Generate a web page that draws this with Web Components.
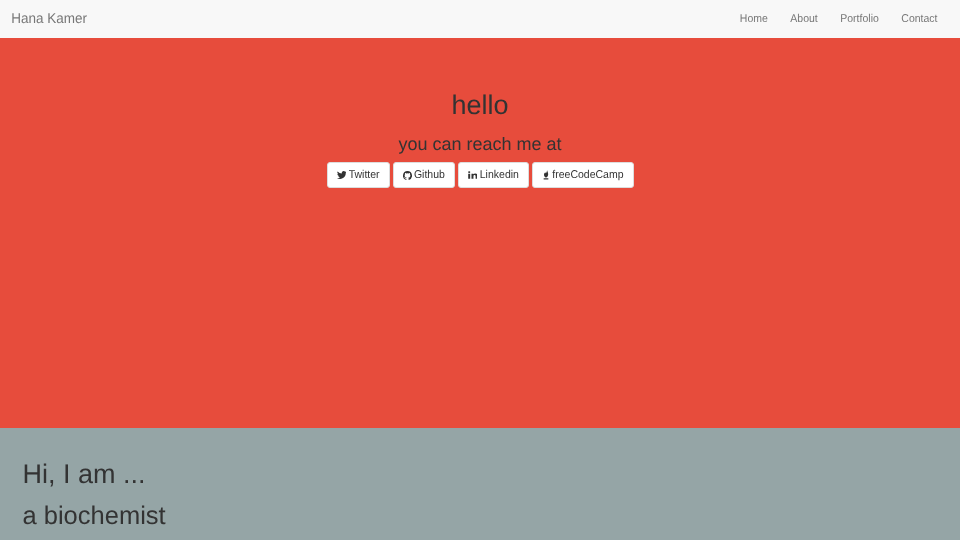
<!DOCTYPE html>
<html>
<head>
<meta charset="utf-8">
<style>
html, body { margin: 0; padding: 0; height: 100%; overflow: hidden; }
body {
	display: flex;
	flex-direction: column;
	font-family: "Liberation Sans", Arial, sans-serif;
	font-size: 10.5px;
	line-height: 15px;
	color: #333;
	text-rendering: geometricPrecision;
}
</style>
</head>
<body>
<site-nav brand="Hana Kamer">
	<nav-link>Home</nav-link>
	<nav-link>About</nav-link>
	<nav-link>Portfolio</nav-link>
	<nav-link>Contact</nav-link>
</site-nav>
<hero-panel>
	<span slot="title">hello</span>
	<span slot="sub">you can reach me at</span>
	<social-btn icon="twitter">Twitter</social-btn>
	<social-btn icon="github">Github</social-btn>
	<social-btn icon="linkedin">Linkedin</social-btn>
	<social-btn icon="fire">freeCodeCamp</social-btn>
</hero-panel>
<about-panel>
	<span slot="title">Hi, I am ...</span>
	<span slot="sub">a biochemist</span>
</about-panel>

<script>
class SiteNav extends HTMLElement
{
	constructor() {
		super();
		this.attachShadow({mode: 'open'});
		this.shadowRoot.innerHTML = `
			<style>
				:host {
					display: flex;
					flex: none;
					justify-content: space-between;
					height: 38px;
					box-sizing: border-box;
					padding: 0 11.25px;
					background: #f8f8f8;
				}
				#brand {
					padding: 11px 0;
					font-size: 13.5px;
					line-height: 15px;
					color: #777;
					filter: blur(.3px);
					transform: scaleY(1.06);
				}
				#links { display: flex; }
			</style>
			<div id="brand"></div>
			<div id="links"><slot></slot></div>
		`;
		this.shadowRoot.getElementById('brand').textContent = this.getAttribute('brand');
	}
}

class NavLink extends HTMLElement
{
	constructor() {
		super();
		this.attachShadow({mode: 'open'});
		this.shadowRoot.innerHTML = `
			<style>
				:host {
					display: block;
					padding: 12px 11.25px 10px;
					font-size: 10.5px;
					line-height: 15px;
					color: #777;
					filter: blur(.3px);
					transform: scaleY(1.08);
				}
			</style>
			<slot></slot>
		`;
	}
}

class HeroPanel extends HTMLElement
{
	constructor() {
		super();
		this.attachShadow({mode: 'open'});
		this.shadowRoot.innerHTML = `
			<style>
				:host {
					display: flex;
					flex: none;
					flex-direction: column;
					align-items: center;
					height: 390px;
					box-sizing: border-box;
					padding-top: 52px;
					background: #e74c3c;
				}
				#title { font-size: 27px; line-height: 30px; filter: blur(.3px); }
				#sub { font-size: 18px; line-height: 20px; margin-top: 14px; filter: blur(.3px); }
				#buttons { display: flex; gap: 3px; margin-top: 8px; }
			</style>
			<div id="title"><slot name="title"></slot></div>
			<div id="sub"><slot name="sub"></slot></div>
			<div id="buttons"><slot></slot></div>
		`;
	}
}

// width, height, viewBox, path
const ICONS = {
	twitter: [9.75, 8, '0 2 24 20', '<path d="M23.95 4.57a10 10 0 0 1-2.82.77 4.96 4.96 0 0 0 2.16-2.72 9.9 9.9 0 0 1-3.12 1.18 4.92 4.92 0 0 0-8.38 4.48A13.98 13.98 0 0 1 1.64 3.16a4.92 4.92 0 0 0 1.52 6.57 4.9 4.9 0 0 1-2.23-.61v.06a4.92 4.92 0 0 0 3.95 4.83 5 5 0 0 1-2.21.08 4.94 4.94 0 0 0 4.6 3.42A9.87 9.87 0 0 1 0 19.54a13.94 13.94 0 0 0 7.55 2.21c9.05 0 14-7.5 14-13.98 0-.21 0-.42-.02-.63a10 10 0 0 0 2.46-2.55z"/>'],
	github: [9, 9, '0 0 24 24', '<path d="M12 .3a12 12 0 0 0-3.8 23.4c.6.1.8-.26.8-.58v-2.03c-3.34.73-4.04-1.6-4.04-1.6-.55-1.4-1.34-1.77-1.34-1.77-1.08-.74.09-.73.09-.73 1.2.09 1.84 1.24 1.84 1.24 1.07 1.83 2.8 1.3 3.49 1 .1-.78.42-1.3.76-1.6-2.67-.3-5.47-1.33-5.47-5.93 0-1.31.47-2.38 1.24-3.22-.13-.3-.54-1.52.1-3.18 0 0 1-.32 3.3 1.23a11.5 11.5 0 0 1 6 0c2.28-1.55 3.29-1.23 3.29-1.23.64 1.66.24 2.88.12 3.18a4.65 4.65 0 0 1 1.23 3.22c0 4.61-2.8 5.63-5.48 5.92.42.36.81 1.1.81 2.22v3.29c0 .32.2.7.82.58A12 12 0 0 0 12 .3z"/>'],
	linkedin: [9.5, 8, '0 0 24 24', '<path d="M.5 8h5v15.5h-5zM3 .5a2.800 2.800 0 1 1 0 5.600 2.800 2.800 0 0 1 0-5.600zM8.800 8h4.700v2.100h.1c.7-1.200 2.300-2.500 4.700-2.500 5 0 5.900 3.200 5.900 7.400v8.500h-5v-7.500c0-1.800 0-4.100-2.500-4.100s-2.900 2-2.900 4v7.600h-5z"/>'],
	fire: [8, 9.5, '0 0 24 24', '<path d="M15 0c1 4 3.500 6 3.500 10.500 0 4.500-3 7.500-6.500 8.500-3.500-.5-6-3.500-6-7 0-3 2-5 4-6.500.5 1.500 1 2.500 2 3 1.500-2.500 3.500-5 3-8.500zM5 21h14v3H5z"/>']
};

class SocialBtn extends HTMLElement
{
	constructor() {
		super();
		this.attachShadow({mode: 'open'});
		const [w, h, box, path] = ICONS[this.getAttribute('icon')];
		this.shadowRoot.innerHTML = `
			<style>
				:host {
					display: flex;
					align-items: center;
					gap: 2.4px;
					height: 26px;
					box-sizing: border-box;
					padding: 0 9px;
					background: #fff;
					border: 1px solid #ddd;
					border-radius: 3px;
					font-size: 10.5px;
					line-height: 15px;
					color: #333;
				}
				svg { width: ${w}px; height: ${h}px; flex: none; fill: #333; }
				span { filter: blur(.3px); transform: scaleY(1.08); }
			</style>
			<svg viewBox="${box}" preserveAspectRatio="none">${path}</svg>
			<span><slot></slot></span>
		`;
	}
}

class AboutPanel extends HTMLElement
{
	constructor() {
		super();
		this.attachShadow({mode: 'open'});
		this.shadowRoot.innerHTML = `
			<style>
				:host {
					display: block;
					flex: 1;
					min-height: 0;
					overflow: hidden;
					padding: 31px 22.5px 0;
					background: #95a5a6;
				}
				#title { font-size: 27px; line-height: 30px; filter: blur(.3px); }
				#sub { font-size: 25.5px; line-height: 28px; margin-top: 13px; filter: blur(.3px); }
			</style>
			<div id="title"><slot name="title"></slot></div>
			<div id="sub"><slot name="sub"></slot></div>
		`;
	}
}

customElements.define('site-nav', SiteNav);
customElements.define('nav-link', NavLink);
customElements.define('hero-panel', HeroPanel);
customElements.define('social-btn', SocialBtn);
customElements.define('about-panel', AboutPanel);
</script>
</body>
</html>
